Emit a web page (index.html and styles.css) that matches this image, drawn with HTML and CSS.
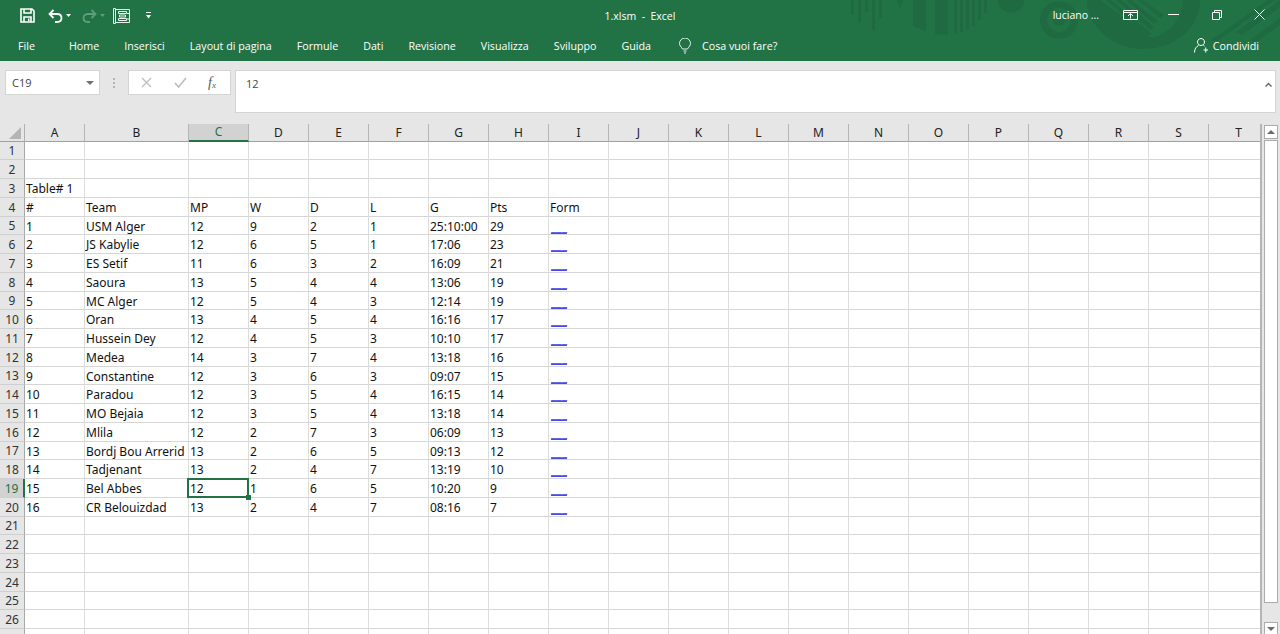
FILE: index.html
```html
<!DOCTYPE html>
<html lang="it">
<head>
<meta charset="utf-8">
<title>1.xlsm - Excel</title>
<link rel="stylesheet" href="styles.css">
</head>
<body>
<div class="app">
  <header class="chrome">
    <svg class="art" viewBox="850 0 430 61" width="430" height="61" aria-hidden="true">
      <g fill="#1f6a41">
        <rect x="851" y="0" width="3" height="15"/><rect x="858" y="0" width="3" height="22"/><rect x="865" y="0" width="3" height="12"/><rect x="872" y="0" width="3" height="30"/><rect x="879" y="0" width="3" height="18"/>
        <path d="M897 0h6l-3 10zM913 0h13v31l-13-5zM935 0h13v35l-13-1zM954 0h3v34h-3zM960 0h3v32h-3zM966 0h3v29h-3zM972 0h3v26h-3zM978 0h3v20h-3zM984 0h3v13h-3z"/>
        <circle cx="1011" cy="-1" r="13.5"/>
        <path fill-rule="evenodd" d="M1059 1a19 19 0 1 0 .01 0zM1059 8a12 12 0 1 1-.01 0z"/>
        <circle cx="1059" cy="20" r="6"/>
        <path d="M1087 0h13l52 38 1 0c18-6 30-20 30-38h17c0 27-24 49-57 49-30 0-56-22-56-49z"/>
        <path d="M1106 0h5l41 34-5 2zM1116 0h5l33 27-4 3zM1126 0h5l27 21-4 3zM1138 0h5l21 15-4 3z"/>
        <path d="M1210 41 1268 0h7l-58 41zM1236 32 1280 0v7l-38 28zM1250 40 1280 18v7l-25 18z"/>
      </g>
    </svg>
    <div class="titlebar">
      <div class="qat">
        <svg class="ic save" width="15" height="15" viewBox="0 0 15 15"><path fill="none" stroke="#fff" stroke-width="1.6" d="M1 1h11l2 2v11H1zM4 1v4h7V1M4 14V9h7v5"/><rect x="8" y="10.5" width="1.5" height="2.5" fill="#fff"/></svg>
        <svg class="ic undo" width="15" height="14" viewBox="0 0 15 14"><path fill="none" stroke="#fff" stroke-width="1.8" d="M5.500 1 1.500 5l4 4M2 5h7c6 0 6 8 0 8H7"/></svg>
        <svg class="ic drop" width="5" height="3" viewBox="0 0 5 3"><path fill="#fff" d="M0 0h5L2.500 3z"/></svg>
        <svg class="ic redo" width="15" height="14" viewBox="0 0 15 14"><path fill="none" stroke="#5f9e7c" stroke-width="1.8" d="M9.500 1l4 4-4 4M13 5H6c-6 0-6 8 0 8h2"/></svg>
        <svg class="ic drop2" width="5" height="3" viewBox="0 0 5 3"><path fill="#5f9e7c" d="M0 0h5L2.500 3z"/></svg>
        <svg class="ic form" width="17" height="16" viewBox="0 0 17 16"><path fill="none" stroke="#e8f1ec" d="M.5.500h2v15h-2zM2.500 1.500h14v13h-14zM5.500 3.500h8v2h-8zM6.500 7h6v2h-6zM5.500 10.500h8v2h-8zM14 5.500h2M14 11h2"/></svg>
        <svg class="ic cust" width="5" height="7" viewBox="0 0 5 7"><path fill="#fff" d="M0 0h5v1H0zM0 3h5L2.500 6.500z"/></svg>
      </div>
      <div class="doc">1.xlsm &nbsp;-&nbsp; Excel</div>
      <div class="win">
        <span class="user">luciano ...</span>
        <svg class="disp" width="15" height="10" viewBox="0 0 15 10"><path fill="none" stroke="#fff" d="M.5.500h14v9H.5zM.5 2.500h14M7.500 8.500V4M5 6l2.500-2.500L10 6"/></svg>
        <svg class="min" width="11" height="1" viewBox="0 0 11 1"><rect width="11" height="1" fill="#fff"/></svg>
        <svg class="max" width="10" height="10" viewBox="0 0 10 10"><path fill="none" stroke="#fff" d="M.5 2.500h7v7h-7zM2.500 2.500v-2h7v7h-2"/></svg>
        <svg class="close" width="11" height="11" viewBox="0 0 11 11"><path fill="none" stroke="#fff" d="M.5.500l10 10M10.500.500l-10 10"/></svg>
      </div>
    </div>
    <nav class="tabs">
      <span class="tab file">File</span>
      <span class="tab">Home</span>
      <span class="tab">Inserisci</span>
      <span class="tab">Layout di pagina</span>
      <span class="tab">Formule</span>
      <span class="tab">Dati</span>
      <span class="tab">Revisione</span>
      <span class="tab">Visualizza</span>
      <span class="tab">Sviluppo</span>
      <span class="tab">Guida</span>
      <span class="tell">
        <svg width="12" height="16" viewBox="0 0 12 16"><path fill="none" stroke="#e8f1ec" d="M3.500 11C2 8.500.5 7.500.5 5.500a5.500 5.500 0 0 1 11 0c0 2-1.500 3-3 5.500zM4.500 13h3M5 15h2"/></svg>
        <span>Cosa vuoi fare?</span>
      </span>
      <span class="share">
        <svg width="14" height="15" viewBox="0 0 14 15"><path fill="none" stroke="#fff" d="M7 .500a3.500 3.500 0 1 1-.01 0zM.500 14.500c0-4 2-6 4-7M9.500 7.500l1 .500M9.500 12h4.500M11.750 9.500v5"/></svg>
        <span>Condividi</span>
      </span>
    </nav>
  </header>

  <section class="fbar">
    <div class="namebox"><span>C19</span><svg width="8" height="4" viewBox="0 0 8 4"><path fill="#707070" d="M0 0h8L4 4z"/></svg></div>
    <div class="grip"><i></i><i></i><i></i></div>
    <div class="fbtns">
      <svg width="11" height="11" viewBox="0 0 11 11"><path fill="none" stroke="#bdbdbd" stroke-width="1.300" d="M1 1l9 9M10 1l-9 9"/></svg>
      <svg width="13" height="11" viewBox="0 0 13 11"><path fill="none" stroke="#bdbdbd" stroke-width="1.600" d="M1 6l3.500 4L12 1"/></svg>
      <span class="fx">f<sub>x</sub></span>
    </div>
    <div class="finput"><span>12</span><svg width="7" height="5" viewBox="0 0 7 5"><path fill="none" stroke="#6a6a6a" stroke-width="1.500" d="M.5 4.500l3-3 3 3"/></svg></div>
  </section>

  <main class="work">
    <div class="sheet" id="sheet"><div class="corner"><svg width="12" height="12" viewBox="0 0 12 12"><path fill="#b4b4b4" d="M12 0v12H0z"/></svg></div></div>
    <aside class="vscroll">
      <div class="sbtn"><svg width="8" height="4" viewBox="0 0 8 4"><path fill="#6a6a6a" d="M4 0l4 4H0z"/></svg></div>
      <div class="thumb"></div>
      <div class="track"></div>
      <div class="sbtn"><svg width="8" height="4" viewBox="0 0 8 4"><path fill="#6a6a6a" d="M0 0h8L4 4z"/></svg></div>
    </aside>
  </main>
</div>
<script src="script.js"></script>
</body>
</html>
```
FILE: styles.css
```css
* { box-sizing: border-box; }
html, body { margin: 0; height: 100%; overflow: hidden; background: #e6e6e6; }
body { font-family: "Open Sans", "Noto Sans", sans-serif; color: #222; }
.app { display: flex; flex-direction: column; width: 1280px; height: 634px; overflow: hidden; }

.chrome { position: relative; height: 61px; background: #217346; color: #fff; font-size: 10.7px; flex: none; }
.art { position: absolute; top: 0; right: 0; }
.titlebar { position: relative; height: 31px; display: grid; grid-template-columns: 1fr auto 1fr; align-items: center; }
.qat { display: flex; align-items: center; padding-left: 20px; }
.ic { flex: none; }
.undo { margin-left: 13px; }
.drop { margin-left: 3px; }
.redo { margin-left: 11px; }
.drop2 { margin-left: 3px; }
.form { margin-left: 8px; }
.cust { margin-left: 16px; }
.doc { font-size: 10.5px; }
.win { display: flex; align-items: center; justify-content: flex-end; padding-bottom: 2px; }
.user { margin-right: 24px; font-size: 10.5px; }
.min { margin-left: 30px; }
.max { margin-left: 33px; }
.close { margin-left: 32px; margin-right: 15px; }
.tabs { position: relative; height: 30px; display: flex; align-items: center; padding: 0 21px 1px 18px; gap: 25px; }
.tab { white-space: nowrap; }
.file { margin-right: 9px; }
.tell { display: flex; align-items: center; gap: 11px; margin-left: 3px; }
.share { display: flex; align-items: center; gap: 5px; margin-left: auto; }

.fbar { flex: none; height: 63px; display: flex; align-items: flex-start; padding: 9px 4px 0 5px; font-size: 11px; color: #444; }
.namebox { width: 95px; height: 25px; background: #fff; border: 1px solid #d4d4d4; display: flex; align-items: center; justify-content: space-between; padding: 0 5px 0 6px; }
.grip { width: 28px; height: 25px; display: flex; flex-direction: column; align-items: center; justify-content: center; gap: 2px; }
.grip i { width: 2px; height: 2px; background: #b4b4b4; }
.fbtns { width: 103px; height: 25px; background: #fff; border: 1px solid #d4d4d4; display: flex; align-items: center; padding-left: 12px; gap: 22px; }
.fx { font-family: "Liberation Serif", serif; font-style: italic; font-size: 14px; color: #5a5a5a; margin-left: -1px; }
.fx sub { font-size: 9px; vertical-align: -1px; }
.finput { flex: 1; margin-left: 4px; height: 43px; background: #fff; border: 1px solid #d4d4d4; display: flex; justify-content: space-between; align-items: flex-start; padding: 5px 3px 0 10px; }
.finput svg { margin-top: 6px; }

.work { flex: 1; min-height: 0; display: flex; background: #e6e6e6; }
.sheet { width: 1262px; height: 510px; overflow: hidden; background: #fff; border-right: 2px solid #b4b4b4; display: grid; grid-template-columns: 25px 60px 104px repeat(18, 60px); grid-template-rows: 17.5px repeat(27, 18.75px); font-family: "Noto Sans", "Open Sans", sans-serif; font-size: 12px; color: #111; }
.corner { background: #e6e6e6; border-right: 1px solid #b0b0b0; border-bottom: 1px solid #a0a0a0; display: flex; justify-content: flex-end; align-items: flex-end; padding: 0 3px 2px 0; }
.col { background: #e6e6e6; border-right: 1px solid #b5b5b5; border-bottom: 1px solid #a0a0a0; display: flex; align-items: center; justify-content: center; color: #222; }
.col.on { background: #d2d2d2; border-bottom: 2px solid #217346; color: #217346; }
.rh { background: #e6e6e6; border-right: 1px solid #a8a8a8; border-bottom: 1px solid #cfcfcf; display: flex; align-items: center; justify-content: center; padding-top: 1px; color: #333; }
.rh.on { background: #d2d2d2; border-right: 2px solid #217346; color: #217346; }
.cell { position: relative; border-right: 1px solid #dcdcdc; border-bottom: 1px solid #d6d6d6; padding: 0 0 0 1px; line-height: 20px; white-space: nowrap; overflow: hidden; }
.cell.link { color: #4a4ae6; padding-left: 2px; text-decoration: underline; text-decoration-thickness: 1px; text-underline-offset: 2px; }
.cell.sel { overflow: visible; z-index: 2; }
.cell.sel::before { content: ""; position: absolute; left: -2px; top: -1px; right: -1px; bottom: -1px; border: 2px solid #217346; }
.cell.sel::after { content: ""; position: absolute; right: -3px; bottom: -3px; width: 5px; height: 5px; background: #217346; }

.vscroll { width: 18px; padding: 1px 2px 0 2px; display: flex; flex-direction: column; gap: 1px; height: 512px; flex: none; }
.sbtn { height: 14px; background: #fff; border: 1px solid #ababab; display: flex; align-items: center; justify-content: center; flex: none; }
.thumb { height: 463px; background: #fff; border: 1px solid #ababab; flex: none; }
.track { flex: 1; }
```
FILE: script.js
```js
var cols = "ABCDEFGHIJKLMNOPQRST".split("");
var data = {
  3: ["Table# 1"],
  4: ["#", "Team", "MP", "W", "D", "L", "G", "Pts", "Form"],
  5: ["1", "USM Alger", "12", "9", "2", "1", "25:10:00", "29", "___"],
  6: ["2", "JS Kabylie", "12", "6", "5", "1", "17:06", "23", "___"],
  7: ["3", "ES Setif", "11", "6", "3", "2", "16:09", "21", "___"],
  8: ["4", "Saoura", "13", "5", "4", "4", "13:06", "19", "___"],
  9: ["5", "MC Alger", "12", "5", "4", "3", "12:14", "19", "___"],
  10: ["6", "Oran", "13", "4", "5", "4", "16:16", "17", "___"],
  11: ["7", "Hussein Dey", "12", "4", "5", "3", "10:10", "17", "___"],
  12: ["8", "Medea", "14", "3", "7", "4", "13:18", "16", "___"],
  13: ["9", "Constantine", "12", "3", "6", "3", "09:07", "15", "___"],
  14: ["10", "Paradou", "12", "3", "5", "4", "16:15", "14", "___"],
  15: ["11", "MO Bejaia", "12", "3", "5", "4", "13:18", "14", "___"],
  16: ["12", "Mlila", "12", "2", "7", "3", "06:09", "13", "___"],
  17: ["13", "Bordj Bou Arrerid", "13", "2", "6", "5", "09:13", "12", "___"],
  18: ["14", "Tadjenant", "13", "2", "4", "7", "13:19", "10", "___"],
  19: ["15", "Bel Abbes", "12", "1", "6", "5", "10:20", "9", "___"],
  20: ["16", "CR Belouizdad", "13", "2", "4", "7", "08:16", "7", "___"]
};
var sheet = document.getElementById("sheet");
function add(cls, text) {
  var d = document.createElement("div");
  d.className = cls;
  d.textContent = text;
  sheet.appendChild(d);
}
cols.forEach(function (c) { add(c === "C" ? "col on" : "col", c); });
for (var r = 1; r <= 27; r++) {
  add(r === 19 ? "rh on" : "rh", r < 27 ? r : "");
  var row = data[r] || [];
  cols.forEach(function (c, i) {
    var cls = "cell";
    if (i === 8 && r >= 5) cls += " link";
    if (r === 19 && c === "C") cls += " sel";
    add(cls, row[i] || "");
  });
}
```
